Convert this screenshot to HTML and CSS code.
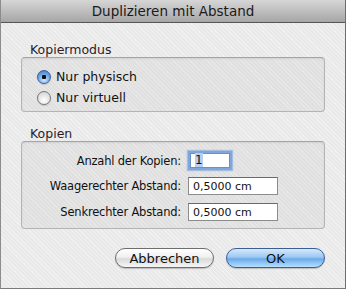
FILE: index.html
```html
<!DOCTYPE html>
<html lang="de">
<head>
  <meta charset="UTF-8" />
  <title>Duplizieren mit Abstand</title>
  <link rel="stylesheet" href="styles.css">
</head>
<body>

  <div class="window">
    <div class="titlebar">Duplizieren mit Abstand</div>

    <div class="content">
      <div class="group-label">Kopiermodus</div>
      <div class="group mode-group">
        <label class="radio-row">
          <span class="radio checked"></span>
          <span>Nur physisch</span>
        </label>
        <label class="radio-row">
          <span class="radio"></span>
          <span>Nur virtuell</span>
        </label>
      </div>

      <div class="group-label second">Kopien</div>
      <div class="group copies-group">
        <div class="field-row">
          <div class="field-label">Anzahl der Kopien:</div>
          <div class="field short focused"><span class="sel">1</span></div>
        </div>
        <div class="field-row">
          <div class="field-label">Waagerechter Abstand:</div>
          <div class="field">0,5000 cm</div>
        </div>
        <div class="field-row">
          <div class="field-label">Senkrechter Abstand:</div>
          <div class="field">0,5000 cm</div>
        </div>
      </div>

      <div class="buttons">
        <div class="btn">Abbrechen</div>
        <div class="btn default">OK</div>
      </div>
    </div>
  </div>

</body>
</html>
```

FILE: styles.css
```css
body {
  margin: 0;
  font-family: 'DejaVu Sans', 'Liberation Sans', sans-serif;
  font-size: 12px;
  color: #111;
  background: #e8e8e8;
}

.window {
  width: 344px;
  height: 288px;
  border-left: 1px solid #8c8c8c;
  border-right: 1px solid #6e6e6e;
  border-bottom: 1px solid #7a7a7a;
  background-color: #e9e9e9;
  background-image: repeating-linear-gradient(45deg, rgba(255,255,255,0.35) 0, rgba(255,255,255,0.35) 1px, transparent 1px, transparent 3px);
  overflow: hidden;
}

.titlebar {
  height: 22px;
  line-height: 22px;
  text-align: center;
  font-size: 13.5px;
  color: #1a1a1a;
  background: linear-gradient(#d6d6d6, #a6a6a6);
  border-bottom: 1px solid #555;
}

.content {
  padding: 0 20px 0 20px;
}

.group-label {
  margin: 20px 0 0 9px;
  height: 14px;
  line-height: 14px;
  font-size: 12.5px;
  color: #2a1a2a;
}

.group-label.second {
  margin-top: 15px;
}

.group {
  border: 1px solid #b4b4b4;
  border-top-color: #a4a4a4;
  border-radius: 4px;
  background: rgba(0,0,0,0.035);
  box-shadow: inset 0 1px 2px rgba(0,0,0,0.08);
}

.mode-group {
  height: 55px;
  padding: 8px 0 0 15px;
  box-sizing: border-box;
  font-size: 12.5px;
}

.radio-row {
  display: flex;
  align-items: center;
  gap: 5px;
  height: 21px;
}

.radio {
  width: 12px;
  height: 12px;
  border-radius: 50%;
  border: 1px solid #777;
  background: radial-gradient(circle at 50% 70%, #ffffff, #dcdcdc 70%, #c4c4c4);
  box-shadow: 0 1px 1px rgba(0,0,0,0.15);
}

.radio.checked {
  border-color: #3a5f9a;
  background: radial-gradient(circle, #111 0, #111 2px, transparent 2.5px), radial-gradient(circle at 50% 75%, #cfe6ff, #6ea6e6 55%, #3b72c4);
}

.copies-group {
  height: 88px;
  box-sizing: border-box;
  padding: 6px 0 0 0;
  font-size: 11.5px;
  letter-spacing: -0.2px;
}

.field-row {
  display: flex;
  align-items: center;
  height: 25.5px;
}

.field-label {
  width: 159px;
  text-align: right;
  padding-right: 7px;
}

.field {
  width: 90px;
  height: 18px;
  line-height: 17px;
  padding: 0 4px;
  box-sizing: border-box;
  border: 1px solid #8c8c8c;
  border-top-color: #6a6a6a;
  background: #fff;
  font-size: 11px;
  letter-spacing: 0;
}

.field.short {
  width: 40px;
  height: 15px;
  line-height: 13px;
  margin-left: 2px;
  font-size: 12px;
}

.field.focused {
  border-color: #6d90c4;
  box-shadow: 0 0 0 2px #7fa6dd, 0 0 1px 3px rgba(110,150,215,0.5);
}

.sel {
  background: #b6d0f3;
}

.buttons {
  display: flex;
  justify-content: flex-end;
  gap: 12px;
  margin-top: 19px;
}

.btn {
  width: 99px;
  height: 20px;
  line-height: 19px;
  box-sizing: border-box;
  text-align: center;
  font-size: 13px;
  border: 1px solid #6e6e6e;
  border-radius: 10px;
  background: linear-gradient(#ffffff, #f0f0f0 45%, #dadada 55%, #f6f6f6);
  box-shadow: 0 1px 1px rgba(0,0,0,0.2);
}

.btn.default {
  border-color: #3b5f94;
  background: linear-gradient(#d6e9fb, #9cc8f2 45%, #6aaaea 55%, #b6e0ff);
}
```
